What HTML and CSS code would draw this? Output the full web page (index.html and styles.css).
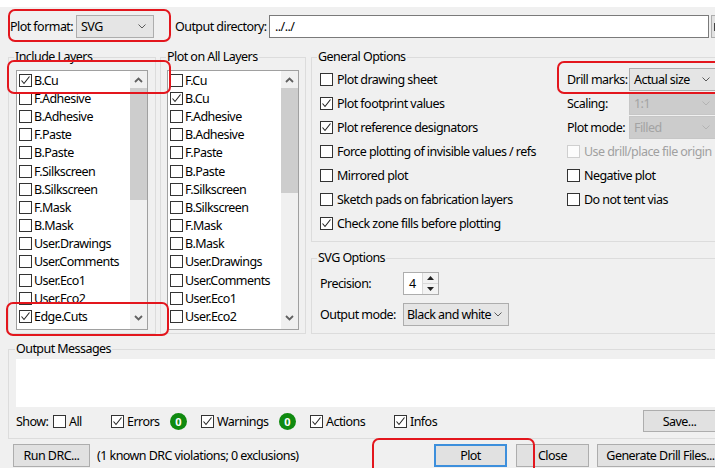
FILE: index.html
```html
<!DOCTYPE html>
<html>
<head>
<meta charset="utf-8">
<title>Plot</title>
<link rel="stylesheet" href="styles.css">
</head>
<body>
<div class="titlestrip"></div>
<div class="dialog">
  <div class="toprow">
    <span class="lbl lbl-format">Plot format:</span>
    <div class="combo combo-format"><span>SVG</span><svg class="chev" viewBox="0 0 8 5"><path d="M0.5 0.5 L4 4 L7.5 0.5"/></svg></div>
    <span class="lbl lbl-outdir">Output directory:</span>
    <div class="textin">../../</div>
    <div class="browse"><span class="browse-ico"></span></div>
  </div>

  <div class="main">
    <div class="group g-include">
      <div class="gtitle">Include Layers</div>
      <div class="listbox">
        <div class="items">
          <div class="item"><span class="cb"><svg viewBox="0 0 11 11"><path d="M1.5 5.5 L4 8.5 L9.5 1.5"/></svg></span>B.Cu</div>
          <div class="item"><span class="cb"></span>F.Adhesive</div>
          <div class="item"><span class="cb"></span>B.Adhesive</div>
          <div class="item"><span class="cb"></span>F.Paste</div>
          <div class="item"><span class="cb"></span>B.Paste</div>
          <div class="item"><span class="cb"></span>F.Silkscreen</div>
          <div class="item"><span class="cb"></span>B.Silkscreen</div>
          <div class="item"><span class="cb"></span>F.Mask</div>
          <div class="item"><span class="cb"></span>B.Mask</div>
          <div class="item"><span class="cb"></span>User.Drawings</div>
          <div class="item"><span class="cb"></span>User.Comments</div>
          <div class="item"><span class="cb"></span>User.Eco1</div>
          <div class="item"><span class="cb"></span>User.Eco2</div>
          <div class="item"><span class="cb"><svg viewBox="0 0 11 11"><path d="M1.5 5.5 L4 8.5 L9.5 1.5"/></svg></span>Edge.Cuts</div>
        </div>
        <div class="vscroll">
          <div class="sarrow"><svg viewBox="0 0 9 6"><path d="M1 5 L4.5 1.5 L8 5"/></svg></div>
          <div class="thumb thumb-a"></div>
          <div class="strack"></div>
          <div class="sarrow sarrow-down"><svg viewBox="0 0 9 6"><path d="M1 1 L4.5 4.5 L8 1"/></svg></div>
        </div>
      </div>
    </div>

    <div class="group g-all">
      <div class="gtitle">Plot on All Layers</div>
      <div class="listbox">
        <div class="items">
          <div class="item"><span class="cb"></span>F.Cu</div>
          <div class="item"><span class="cb"><svg viewBox="0 0 11 11"><path d="M1.5 5.5 L4 8.5 L9.5 1.5"/></svg></span>B.Cu</div>
          <div class="item"><span class="cb"></span>F.Adhesive</div>
          <div class="item"><span class="cb"></span>B.Adhesive</div>
          <div class="item"><span class="cb"></span>F.Paste</div>
          <div class="item"><span class="cb"></span>B.Paste</div>
          <div class="item"><span class="cb"></span>F.Silkscreen</div>
          <div class="item"><span class="cb"></span>B.Silkscreen</div>
          <div class="item"><span class="cb"></span>F.Mask</div>
          <div class="item"><span class="cb"></span>B.Mask</div>
          <div class="item"><span class="cb"></span>User.Drawings</div>
          <div class="item"><span class="cb"></span>User.Comments</div>
          <div class="item"><span class="cb"></span>User.Eco1</div>
          <div class="item"><span class="cb"></span>User.Eco2</div>
        </div>
        <div class="vscroll">
          <div class="sarrow"><svg viewBox="0 0 9 6"><path d="M1 5 L4.5 1.5 L8 5"/></svg></div>
          <div class="thumb thumb-b"></div>
          <div class="strack"></div>
          <div class="sarrow sarrow-down"><svg viewBox="0 0 9 6"><path d="M1 1 L4.5 4.5 L8 1"/></svg></div>
        </div>
      </div>
    </div>

    <div class="rightcol">
      <div class="group g-general">
        <div class="gtitle">General Options</div>
        <div class="gen-grid">
          <div class="opt"><span class="cb"></span>Plot drawing sheet</div>
          <div class="opt"><span class="rlbl">Drill marks:</span><div class="combo combo-wide"><span>Actual size</span><svg class="chev" viewBox="0 0 8 5"><path d="M0.5 0.5 L4 4 L7.5 0.5"/></svg></div></div>

          <div class="opt"><span class="cb"><svg viewBox="0 0 11 11"><path d="M1.5 5.5 L4 8.5 L9.5 1.5"/></svg></span>Plot footprint values</div>
          <div class="opt"><span class="rlbl">Scaling:</span><div class="combo combo-wide combo-off"><span>1:1</span><svg class="chev" viewBox="0 0 8 5"><path d="M0.5 0.5 L4 4 L7.5 0.5"/></svg></div></div>

          <div class="opt"><span class="cb"><svg viewBox="0 0 11 11"><path d="M1.5 5.5 L4 8.5 L9.5 1.5"/></svg></span>Plot reference designators</div>
          <div class="opt"><span class="rlbl">Plot mode:</span><div class="combo combo-wide combo-off"><span>Filled</span><svg class="chev" viewBox="0 0 8 5"><path d="M0.5 0.5 L4 4 L7.5 0.5"/></svg></div></div>

          <div class="opt"><span class="cb"></span>Force plotting of invisible values / refs</div>
          <div class="opt opt-off"><span class="cb cb-off"></span>Use drill/place file origin</div>

          <div class="opt"><span class="cb"></span>Mirrored plot</div>
          <div class="opt"><span class="cb"></span>Negative plot</div>

          <div class="opt"><span class="cb"></span>Sketch pads on fabrication layers</div>
          <div class="opt"><span class="cb"></span>Do not tent vias</div>

          <div class="opt"><span class="cb"><svg viewBox="0 0 11 11"><path d="M1.5 5.5 L4 8.5 L9.5 1.5"/></svg></span>Check zone fills before plotting</div>
          <div class="opt"></div>
        </div>
      </div>

      <div class="group g-svg">
        <div class="gtitle">SVG Options</div>
        <div class="svg-row svg-row-first">
          <span class="slbl">Precision:</span>
          <div class="spin">
            <div class="spin-val">4</div>
            <div class="spin-btns">
              <div class="spin-btn"><svg viewBox="0 0 7 4"><path d="M0 4 L3.5 0 L7 4 Z"/></svg></div>
              <div class="spin-btn"><svg viewBox="0 0 7 4"><path d="M0 0 L3.5 4 L7 0 Z"/></svg></div>
            </div>
          </div>
        </div>
        <div class="svg-row">
          <span class="slbl">Output mode:</span>
          <div class="combo combo-mode"><span>Black and white</span><svg class="chev" viewBox="0 0 8 5"><path d="M0.5 0.5 L4 4 L7.5 0.5"/></svg></div>
        </div>
      </div>
    </div>
  </div>

  <div class="group g-output">
    <div class="gtitle">Output Messages</div>
    <div class="msgbox"></div>
    <div class="showrow">
      <span class="w-show">Show:</span>
      <span class="chk w-all"><span class="cb"></span>All</span>
      <span class="chk w-errors"><span class="cb"><svg viewBox="0 0 11 11"><path d="M1.5 5.5 L4 8.5 L9.5 1.5"/></svg></span>Errors</span>
      <span class="badge">0</span>
      <span class="chk w-warn"><span class="cb"><svg viewBox="0 0 11 11"><path d="M1.5 5.5 L4 8.5 L9.5 1.5"/></svg></span>Warnings</span>
      <span class="badge">0</span>
      <span class="chk w-act"><span class="cb"><svg viewBox="0 0 11 11"><path d="M1.5 5.5 L4 8.5 L9.5 1.5"/></svg></span>Actions</span>
      <span class="chk"><span class="cb"><svg viewBox="0 0 11 11"><path d="M1.5 5.5 L4 8.5 L9.5 1.5"/></svg></span>Infos</span>
      <div class="btn btn-save">Save...</div>
    </div>
  </div>

  <div class="btnrow">
    <div class="btn btn-drc">Run DRC...</div>
    <span class="drcmsg">(1 known DRC violations; 0 exclusions)</span>
    <div class="btn btn-plot">Plot</div>
    <div class="btn btn-close">Close</div>
    <div class="btn btn-drill">Generate Drill Files...</div>
  </div>
</div>

<div class="mark mark-format"></div>
<div class="mark mark-bcu"></div>
<div class="mark mark-edge"></div>
<div class="mark mark-drill"></div>
<div class="mark mark-plot"></div>
</body>
</html>
```

FILE: styles.css
```css
* { box-sizing: border-box; }

html, body { margin: 0; padding: 0; }

body {
  background: #f0f0f0;
  font-family: "Noto Sans", "Liberation Sans", sans-serif;
  font-size: 12.5px;
  letter-spacing: -0.55px;
  color: #000;
  width: 715px;
  height: 468px;
  overflow: hidden;
  position: relative;
}

.titlestrip { height: 7px; background: #fff; }

.dialog {
  width: 724px;
  padding: 8px 0 0 8px;
}

/* ---------- top row ---------- */
.toprow { display: flex; align-items: center; height: 23px; }
.lbl { white-space: nowrap; flex: none; }
.lbl-format { margin-left: 2px; width: 66px; }
.lbl-outdir { margin-left: 21px; width: 94px; }

.combo {
  height: 23px;
  border: 1px solid #adadad;
  background: #e5e5e5;
  display: flex;
  align-items: center;
  justify-content: space-between;
  padding: 0 7px 0 4px;
  white-space: nowrap;
  flex: none;
}
.combo .chev { width: 8px; height: 5px; flex: none; }
.chev path { fill: none; stroke: #5a5a5a; stroke-width: 1; }
.combo-format { width: 78px; }
.combo-wide { width: 89px; }
.combo-off { background: #cccccc; border-color: #c6c6c6; color: #a3a3a3; }
.combo-off .chev path { stroke: #b3b3b3; }
.combo-mode { width: 106px; padding: 0 6px 0 3px; }

.textin {
  width: 440px;
  height: 23px;
  border: 1px solid #7a7a7a;
  background: #fff;
  padding-left: 5px;
  line-height: 21px;
  flex: none;
}
.browse {
  margin-left: 2px;
  width: 26px;
  height: 23px;
  border: 1px solid #adadad;
  background: #e1e1e1;
  padding: 7px 0 0 2px;
  flex: none;
}
.browse-ico { display: block; width: 4px; height: 8px; background: #444; }

/* ---------- group boxes ---------- */
.group {
  --pl: 7px;
  border: 1px solid #dcdcdc;
  padding-left: var(--pl);
}
.gtitle {
  margin: -9px 0 0 calc(5px - var(--pl));
  padding: 0 1px;
  width: max-content;
  height: 16px;
  line-height: 16px;
  background: #f0f0f0;
  white-space: nowrap;
}

.main { display: flex; align-items: flex-start; margin-top: 19px; }

.g-include { width: 148px; padding-right: 7px; padding-bottom: 3px; }
.g-all { --pl: 6px; width: 146px; padding-right: 6px; padding-bottom: 3px; margin-left: 4px; }

.listbox {
  margin-top: 5px;
  width: 132px;
  height: 260px;
  border: 1px solid #a0a0a0;
  background: #fff;
  display: flex;
}
.items { flex: 1; overflow: hidden; }
.item {
  height: 18.2px;
  display: flex;
  align-items: center;
  padding-left: 2px;
  white-space: nowrap;
}
.item .cb { margin-right: 2px; }

.cb {
  width: 13px;
  height: 13px;
  border: 1px solid #333;
  background: #fff;
  flex: none;
  display: inline-block;
}
.cb svg { display: block; width: 11px; height: 11px; }
.cb path { fill: none; stroke: #222; stroke-width: 1.1; }
.cb-off { border-color: #cfcfcf; background: #fcfcfc; }

.vscroll {
  width: 17px;
  background: #f0f0f0;
  display: flex;
  flex-direction: column;
  align-items: center;
}
.sarrow { height: 17px; width: 17px; display: flex; align-items: center; justify-content: center; flex: none; }
.sarrow svg { width: 9px; height: 6px; }
.sarrow path { fill: none; stroke: #606060; stroke-width: 1.8; }
.sarrow-down { margin-bottom: 3px; }
.thumb { width: 17px; background: #cdcdcd; flex: none; }
.thumb-a { height: 112px; }
.thumb-b { height: 105px; }
.strack { flex: 1; }

/* right column */
.rightcol { margin-left: 5px; width: 413px; }

.g-general { --pl: 8px; height: 185px; padding-right: 6px; }
.gen-grid {
  margin-top: 2px;
  display: grid;
  grid-template-columns: 247px 1fr;
  grid-auto-rows: 24.1px;
}
.opt { display: flex; align-items: center; white-space: nowrap; }
.opt .cb { margin-right: 4px; }
.opt-off { color: #a0a0a0; }
.rlbl { width: 62px; flex: none; }

.g-svg { --pl: 8px; margin-top: 16px; padding-right: 6px; padding-bottom: 7px; }
.svg-row { display: flex; align-items: center; height: 23px; margin-top: 8px; }
.svg-row-first { margin-top: 6px; }
.slbl { width: 83px; flex: none; }

.spin {
  display: flex;
  height: 23px;
  width: 36px;
  border: 1px solid #adadad;
  background: #fff;
}
.spin-val { width: 18px; padding-left: 5px; line-height: 21px; }
.spin-btns { width: 16px; display: flex; flex-direction: column; border-left: 1px solid #d9d9d9; background: #f3f3f3; }
.spin-btn { flex: 1; display: flex; align-items: center; justify-content: center; }
.spin-btn + .spin-btn { border-top: 1px solid #d9d9d9; }
.spin-btn svg { width: 7px; height: 4px; display: block; }
.spin-btn path { fill: #222; }

/* output messages */
.g-output { --pl: 7px; margin-top: 15px; padding-right: 7px; padding-bottom: 6px; }
.g-output .gtitle { margin-left: calc(6px - var(--pl)); }
.msgbox { margin-top: 2px; height: 48px; background: #fff; }
.showrow { display: flex; align-items: center; height: 22px; margin-top: 3px; white-space: nowrap; }
.w-show { width: 37px; flex: none; }
.chk { display: flex; align-items: center; flex: none; }
.chk .cb { margin-right: 3px; }
.w-all { width: 58px; }
.w-errors { width: 59px; }
.w-warn { width: 78px; }
.w-act { width: 84px; }
.badge {
  width: 17px;
  height: 17px;
  border-radius: 50%;
  background: #108a10;
  color: #fff;
  font-weight: bold;
  font-size: 11px;
  letter-spacing: 0;
  display: flex;
  align-items: center;
  justify-content: center;
  margin-right: 14px;
  flex: none;
}

.btn {
  height: 22px;
  border: 1px solid #adadad;
  background: #e1e1e1;
  display: flex;
  align-items: center;
  justify-content: center;
  white-space: nowrap;
  flex: none;
}
.btn-save { width: 73px; margin-left: auto; }

/* bottom buttons */
.btnrow { display: flex; align-items: center; margin-top: 5px; height: 23px; }
.btnrow .btn { height: 23px; }
.btn-drc { width: 77px; margin-left: 5px; }
.drcmsg { margin-left: 7px; white-space: nowrap; }
.btn-plot { width: 73px; margin-left: auto; border: 2px solid #3d8fdc; }
.btn-close { width: 73px; margin-left: 9px; }
.btn-drill { width: 127px; margin-left: 8px; }

/* red callout frames drawn over the dialog */
.mark {
  position: absolute;
  border: 2px solid #e3161d;
  border-radius: 7px;
}
.mark-format { left: 8px; top: 9px; width: 163px; height: 33px; }
.mark-bcu { left: 7px; top: 60px; width: 164px; height: 34px; }
.mark-edge { left: 6px; top: 302px; width: 163px; height: 34px; }
.mark-drill { left: 557px; top: 61px; width: 170px; height: 33px; }
.mark-plot { left: 372px; top: 438px; width: 163px; height: 40px; }
```
